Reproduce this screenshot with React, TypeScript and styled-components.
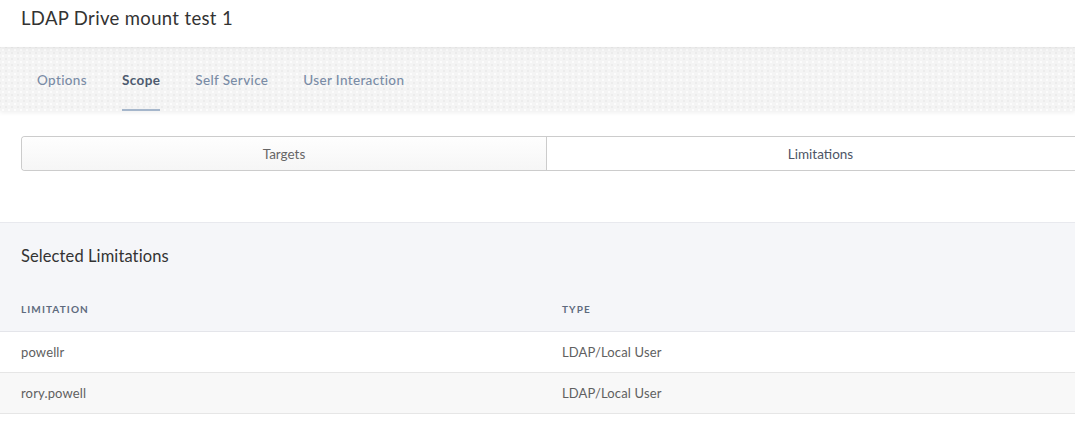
import React from 'react';
import styled, { createGlobalStyle } from 'styled-components';

const GlobalStyle = createGlobalStyle`
  html, body {
    margin: 0;
    padding: 0;
    background: #ffffff;
    font-family: Lato, "Open Sans", "Liberation Sans", sans-serif;
    overflow: hidden;
  }
`;

const Page = styled.div`
  width: 1075px;
  height: 427px;
  display: flex;
  flex-direction: column;
  background: #ffffff;
`;

const Header = styled.header`
  height: 47px;
  display: flex;
  align-items: flex-start;
  padding: 7px 21px 0;
  box-sizing: border-box;
  position: relative;
  z-index: 2;
  box-shadow: 0 2px 6px rgba(0, 0, 0, 0.06);
`;

const Title = styled.h1`
  margin: 0;
  font-size: 18.5px;
  font-weight: 400;
  color: #333333;
  letter-spacing: 0.35px;
`;

const TabBar = styled.nav`
  height: 64px;
  display: flex;
  align-items: stretch;
  padding: 0 0 0 37px;
  box-sizing: border-box;
  background-color: #f4f4f4;
  background-image: radial-gradient(rgba(255, 255, 255, 0.7) 1px, transparent 1.5px),
    radial-gradient(rgba(230, 230, 230, 0.6) 1px, transparent 1.5px);
  background-size: 6px 6px, 6px 6px;
  background-position: 0 0, 3px 3px;
  box-shadow: 0 2px 4px rgba(0, 0, 0, 0.06);
  position: relative;
  z-index: 1;
`;

const Tab = styled.div<{ $active?: boolean }>`
  display: flex;
  align-items: center;
  margin-right: 35px;
  font-size: 13.5px;
  letter-spacing: ${(p) => (p.$active ? '0.4px' : '0.35px')};
  font-weight: ${(p) => (p.$active ? 700 : 500)};
  color: ${(p) => (p.$active ? '#4d5a6f' : '#7a8ca6')};
  border-bottom: 2px solid ${(p) => (p.$active ? '#a5b6cb' : 'transparent')};
  box-sizing: border-box;
  padding-top: 3px;
  height: 64px;
`;

const Body = styled.section`
  padding: 25px 0 0 21px;
  height: 112px;
  box-sizing: border-box;
  border-bottom: 1px solid #e8e9ee;
`;

const Segmented = styled.div`
  display: flex;
  width: 1073px;
  height: 35px;
  border: 1px solid #cccccc;
  border-right: none;
  border-radius: 4px 0 0 4px;
  box-sizing: border-box;
  overflow: hidden;
`;

const Segment = styled.div<{ $selected?: boolean; $width: number }>`
  width: ${(p) => p.$width}px;
  display: flex;
  align-items: center;
  justify-content: center;
  font-size: 13.5px;
  color: ${(p) => (p.$selected ? '#4d5566' : '#666666')};
  background: ${(p) =>
    p.$selected ? '#ffffff' : 'linear-gradient(#fefefe, #f6f6f6)'};
  & + & {
    border-left: 1px solid #cccccc;
  }
`;

const Limitations = styled.section`
  flex: 1;
  background: #ffffff;
`;

const Panel = styled.div`
  background: #f5f6f9;
  padding: 23px 21px 0;
`;

const PanelTitle = styled.h2`
  margin: 0;
  font-size: 16.5px;
  font-weight: 400;
  color: #333333;
  letter-spacing: 0.1px;
  height: 46px;
`;

const Row = styled.div<{ $shade?: boolean }>`
  display: grid;
  grid-template-columns: 541px 1fr;
  align-items: center;
  height: 40px;
  padding: 0 21px;
  background: ${(p) => (p.$shade ? '#f8f8f8' : '#ffffff')};
  border-bottom: 1px solid #e6e6e6;
  font-size: 13px;
  letter-spacing: 0.15px;
  color: #606060;
`;

const HeadRow = styled.div`
  display: grid;
  grid-template-columns: 541px 1fr;
  align-items: center;
  height: 34px;
  margin: 0 -21px;
  padding: 0 21px 5px;
  border-bottom: 1px solid #e4e5ea;
  font-size: 10px;
  font-weight: 700;
  letter-spacing: 1.1px;
  color: #5e6a7e;
  text-transform: uppercase;
`;

const tabs = ['Options', 'Scope', 'Self Service', 'User Interaction'];

const rows = [
  { name: 'powellr', type: 'LDAP/Local User' },
  { name: 'rory.powell', type: 'LDAP/Local User' },
];

export default function App() {
  return (
    <Page>
      <GlobalStyle />
      <Header>
        <Title>LDAP Drive mount test 1</Title>
      </Header>
      <TabBar>
        {tabs.map((t) => (
          <Tab key={t} $active={t === 'Scope'}>
            {t}
          </Tab>
        ))}
      </TabBar>
      <Body>
        <Segmented>
          <Segment $width={525}>Targets</Segment>
          <Segment $width={548} $selected>
            Limitations
          </Segment>
        </Segmented>
      </Body>
      <Limitations>
        <Panel>
          <PanelTitle>Selected Limitations</PanelTitle>
          <HeadRow>
            <span>Limitation</span>
            <span>Type</span>
          </HeadRow>
        </Panel>
        {rows.map((r, i) => (
          <Row key={r.name} $shade={i % 2 === 1}>
            <span>{r.name}</span>
            <span>{r.type}</span>
          </Row>
        ))}
      </Limitations>
    </Page>
  );
}
